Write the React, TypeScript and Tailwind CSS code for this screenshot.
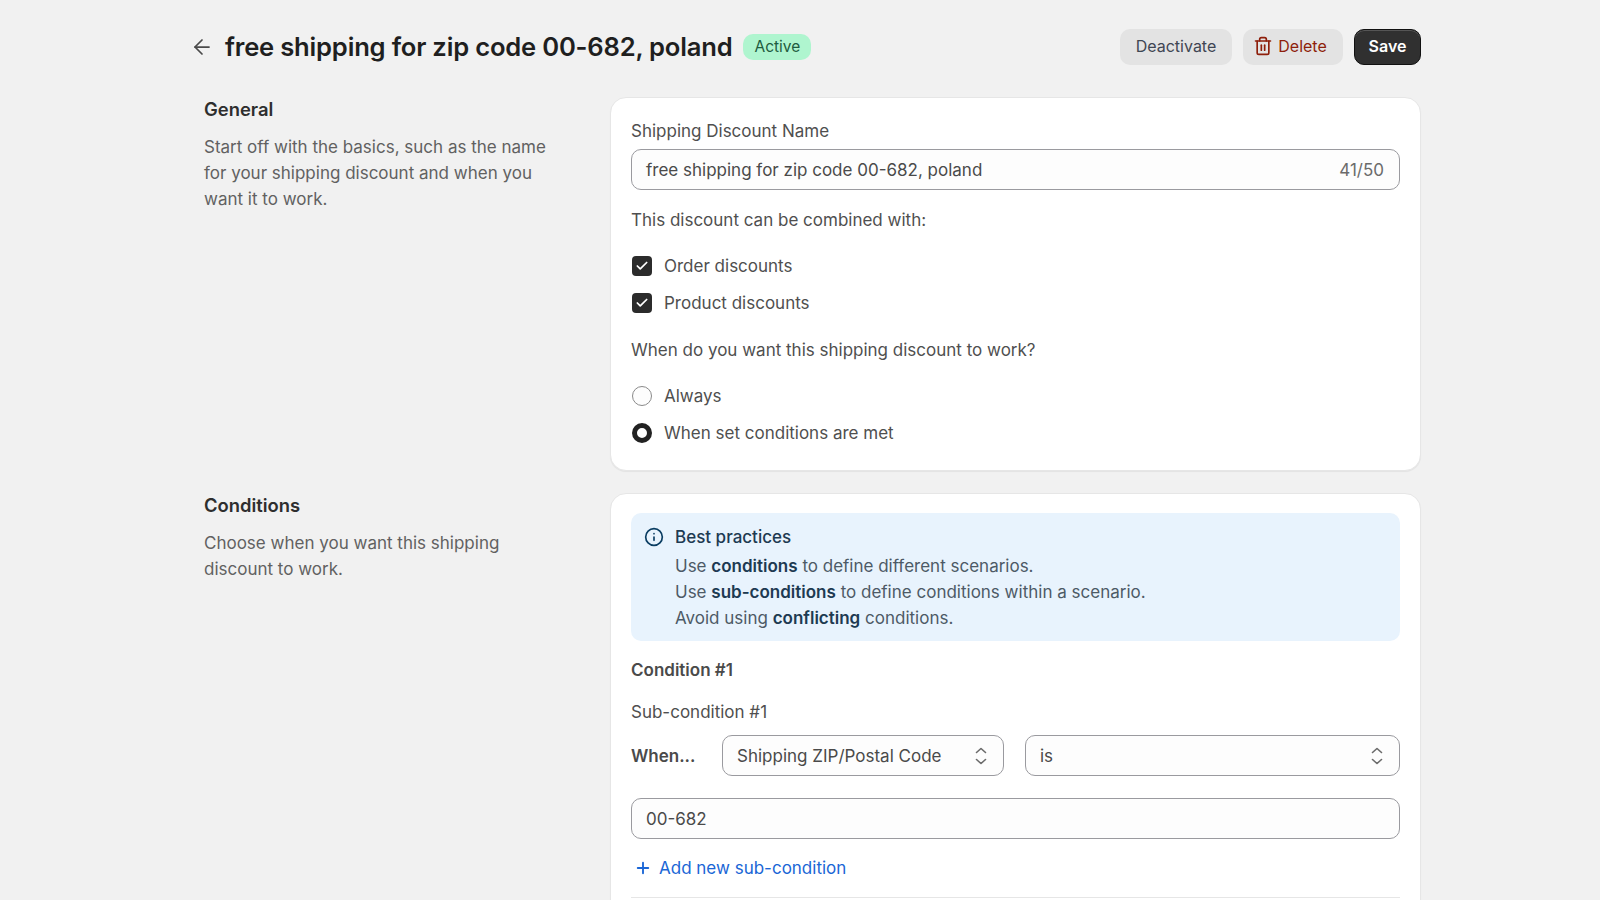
import React from 'react';
import { ArrowLeft, Info, Plus, Trash2, Check } from 'lucide-react';

const inputClass =
  'flex items-center h-[41px] rounded-[10px] border border-[#9a9a9f] bg-[#fdfdfd] pl-[14px] pr-[15px] text-[#4a4a4a]';

const CheckRow: React.FC<{ label: string }> = ({ label }) => (
  <div className="flex items-center h-[26px] gap-[12px] pl-[1px]">
    <span className="flex items-center justify-center w-[20px] h-[20px] rounded-[4px] bg-[#2b2b2b]">
      <Check className="w-[14px] h-[14px] text-white" strokeWidth={3} />
    </span>
    <span className="text-[#4f4f4f]">{label}</span>
  </div>
);

const RadioRow: React.FC<{ label: string; checked?: boolean }> = ({ label, checked }) => (
  <div className="flex items-center h-[26px] gap-[12px] pl-[1px]">
    {checked ? (
      <span className="w-[20px] h-[20px] rounded-full border-[5px] border-[#222222] bg-white" />
    ) : (
      <span className="w-[20px] h-[20px] rounded-full border border-[#8a8a8a] bg-[#fdfdfd]" />
    )}
    <span className="text-[#4f4f4f]">{label}</span>
  </div>
);

const Select: React.FC<{ value: string; className: string }> = ({ value, className }) => (
  <div className={`${inputClass} justify-between ${className}`}>
    <span>{value}</span>
    <svg viewBox="0 0 12 18" className="w-[12px] h-[18px] mr-[1px] text-[#6b6b6b]" fill="none" stroke="currentColor" strokeWidth="1.6" strokeLinecap="round" strokeLinejoin="round">
      <path d="M1.5 5.5 6 1.5l4.5 4" />
      <path d="M1.5 12.5 6 16.5l4.5-4" />
    </svg>
  </div>
);

export default function App() {
  return (
    <div className="h-[900px] overflow-hidden bg-[#f1f1f1] font-['Inter',sans-serif] text-[17px] leading-[26px] text-[#4f4f4f]">
      <div className="ml-[190px] w-[1231px]">
        <header className="flex items-center justify-between h-[97px] pb-[3px]">
          <div className="flex items-center">
            <ArrowLeft className="w-[24px] h-[24px] text-[#4a4a4a]" strokeWidth={1.75} />
            <h1 className="ml-[11px] text-[25.6px] leading-[32px] font-semibold text-[#1f1f1f] tracking-[-0.2px]">
              free shipping for zip code 00-682, poland
            </h1>
            <span className="ml-[11px] flex items-center h-[26px] px-[11px] rounded-[10px] bg-[#aff5cf] text-[15.5px] text-[#1e5c40]">
              Active
            </span>
          </div>
          <div className="flex items-center gap-[11px] text-[16px]">
            <button className="h-[36px] w-[112px] pb-[2px] rounded-[10px] bg-[#e3e3e3] text-[#3f4653]">Deactivate</button>
            <button className="flex items-center justify-center gap-[5px] h-[36px] w-[100px] pb-[2px] pr-[6px] rounded-[10px] bg-[#e3e3e3] text-[#8e1f0b]">
              <Trash2 className="w-[20px] h-[20px]" strokeWidth={2} />
              Delete
            </button>
            <button className="h-[36px] w-[67px] pb-[2px] rounded-[10px] border border-[#111111] bg-[#303030] font-semibold text-white shadow-[inset_0_1px_0_#555555]">
              Save
            </button>
          </div>
        </header>

        <section className="flex">
          <div className="w-[420px] pl-[14px]">
            <h2 className="font-semibold text-[18.4px] leading-[24px] text-[#2e2e2e]">General</h2>
            <p className="mt-[13px] w-[350px] text-[#616161]">
              Start off with the basics, such as the name for your shipping discount and when you want it to work.
            </p>
          </div>
          <div className="w-[811px] rounded-[16px] bg-white px-[20px] pt-[20px] pb-[24px] border border-[#e6e6e6] shadow-[0_1px_1px_rgba(0,0,0,0.06)]">
            <div className="mb-[5px]">Shipping Discount Name</div>
            <div className={`${inputClass} justify-between`}>
              <span>free shipping for zip code 00-682, poland</span>
              <span className="text-[#6b6b6b]">41/50</span>
            </div>
            <div className="mt-[17px] mb-[20px]">This discount can be combined with:</div>
            <div className="flex flex-col gap-[11px]">
              <CheckRow label="Order discounts" />
              <CheckRow label="Product discounts" />
            </div>
            <div className="mt-[21px] mb-[20px]">When do you want this shipping discount to work?</div>
            <div className="flex flex-col gap-[11px]">
              <RadioRow label="Always" />
              <RadioRow label="When set conditions are met" checked />
            </div>
          </div>
        </section>

        <section className="flex mt-[22px]">
          <div className="w-[420px] pl-[14px]">
            <h2 className="font-semibold text-[18.4px] leading-[24px] text-[#2e2e2e]">Conditions</h2>
            <p className="mt-[13px] w-[350px] text-[#616161]">
              Choose when you want this shipping discount to work.
            </p>
          </div>
          <div className="w-[811px] rounded-[16px] bg-white px-[20px] pt-[19px] pb-[19px] border border-[#e6e6e6] shadow-[0_1px_1px_rgba(0,0,0,0.06)]">
            <div className="flex h-[128px] rounded-[10px] bg-[#e8f3fd] pl-[13px] pt-[11px]">
              <Info className="w-[20px] h-[20px] mt-[3px] text-[#0a3d62]" strokeWidth={2} />
              <div className="ml-[11px] text-[#4d5a66]">
                <div className="mb-[3px] font-medium text-[#1d3a52]">Best practices</div>
                <div>
                  Use <b className="font-semibold text-[#1d3a52]">conditions</b> to define different scenarios.
                </div>
                <div>
                  Use <b className="font-semibold text-[#1d3a52]">sub-conditions</b> to define conditions within a scenario.
                </div>
                <div>
                  Avoid using <b className="font-semibold text-[#1d3a52]">conflicting</b> conditions.
                </div>
              </div>
            </div>
            <div className="mt-[16px] font-semibold text-[#4a4a4a]">Condition #1</div>
            <div className="mt-[16px]">Sub-condition #1</div>
            <div className="flex items-center mt-[10px]">
              <span className="w-[91px] font-semibold text-[#4a4a4a]">When...</span>
              <Select value="Shipping ZIP/Postal Code" className="w-[282px]" />
              <Select value="is" className="ml-[21px] w-[375px]" />
            </div>
            <div className={`${inputClass} mt-[22px]`}>00-682</div>
            <div className="flex items-center mt-[16px] ml-[3px] text-[#1a66d6]">
              <Plus className="w-[18px] h-[18px]" strokeWidth={2.5} />
              <span className="ml-[7px]">Add new sub-condition</span>
            </div>
            <div className="mt-[16px] h-px bg-[#e6e6e6]" />
            <div className="h-[60px]" />
          </div>
        </section>
      </div>
    </div>
  );
}
